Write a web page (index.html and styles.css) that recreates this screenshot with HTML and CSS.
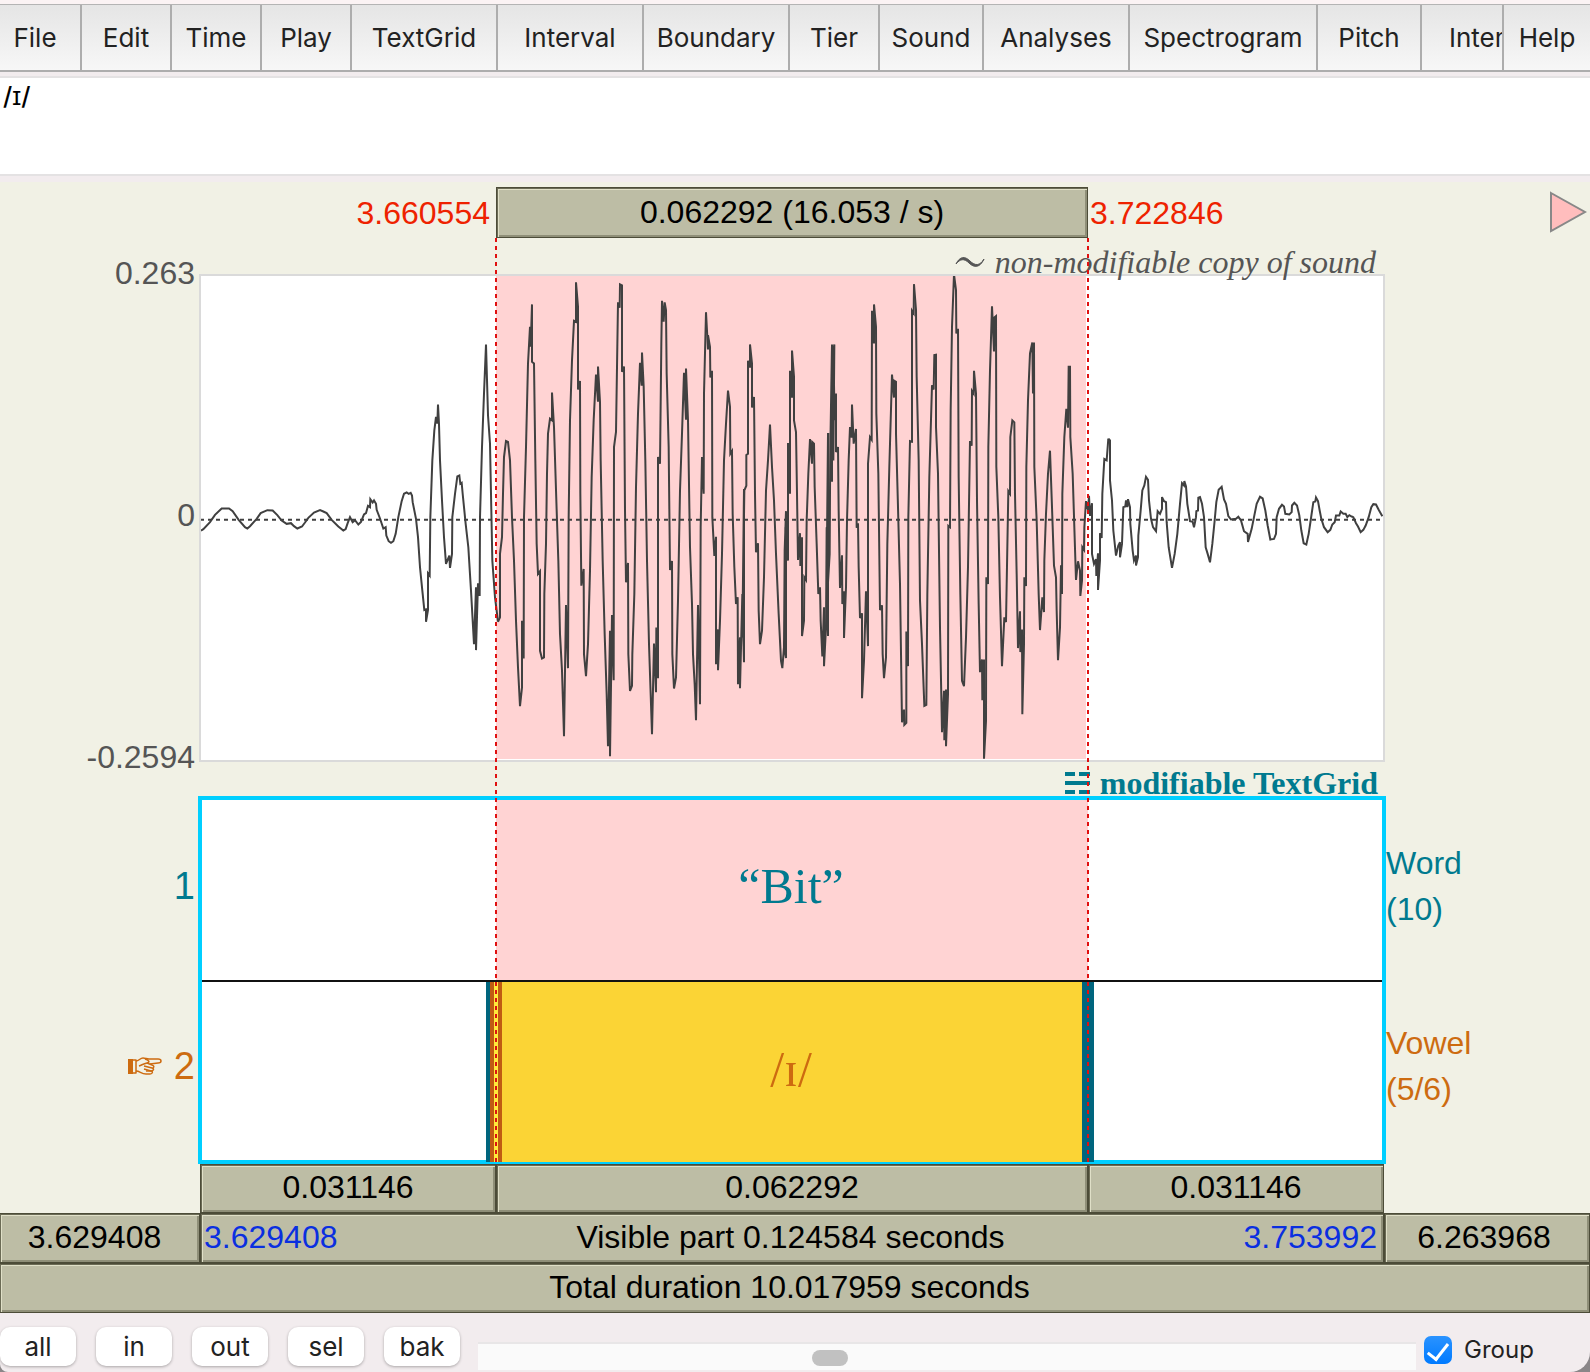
FILE: index.html
```html
<!DOCTYPE html>
<html lang="en">
<head>
    <meta charset="UTF-8">
    <meta name="viewport" content="width=device-width, initial-scale=1.0">
    <title>TextGrid editor</title>
    <link rel="stylesheet" href="styles.css">
</head>
<body>
    <div class="window">
        <nav class="menu-bar">
            <button type="button" class="menu menu-first">File</button>
            <button type="button" class="menu">Edit</button>
            <button type="button" class="menu">Time</button>
            <button type="button" class="menu">Play</button>
            <button type="button" class="menu menu-wide">TextGrid</button>
            <button type="button" class="menu menu-wide">Interval</button>
            <button type="button" class="menu menu-wide">Boundary</button>
            <button type="button" class="menu">Tier</button>
            <button type="button" class="menu menu-medium">Sound</button>
            <button type="button" class="menu menu-wide">Analyses</button>
            <button type="button" class="menu menu-widest">Spectrogram</button>
            <button type="button" class="menu menu-medium">Pitch</button>
            <button type="button" class="menu menu-cut">Intensity</button>
            <button type="button" class="menu menu-last">Help</button>
        </nav>

        <textarea class="label-text" aria-label="Interval text" spellcheck="false">/ɪ/</textarea>

        <main class="editor">
            <!-- selection -->
            <span class="time time-start">3.660554</span>
            <button type="button" class="bar bar-selection">0.062292 (16.053 / s)</button>
            <span class="time time-end">3.722846</span>
            <button type="button" class="play" aria-label="Play">
                <svg width="38" height="42" viewBox="0 0 38 42"><path d="M2 2 L36 21 L2 40 Z" fill="#ffbdbd" stroke="#888" stroke-width="2"/></svg>
            </button>

            <!-- sound -->
            <div class="caption caption-sound">
                <svg width="30" height="12" viewBox="0 0 30 12"><path d="M1 8 C5 0 10 0 15 5 C20 10 25 10 29 3 C25 12 19 12 14 7 C9 2 5 3 1 8 Z" fill="#555" stroke="#555" stroke-width="1"/></svg>
                <span>non-modifiable copy of sound</span>
            </div>
            <div class="axis">
                <span>0.263</span>
                <span>0</span>
                <span>-0.2594</span>
            </div>
            <div class="sound">
                <svg class="wave" viewBox="0 45 3552 1455" preserveAspectRatio="none">
                    <rect x="888" y="42" width="1770" height="1452" fill="#ffd3d3"/>
                    <path class="zero" d="M0 778 H3552"/>
                    <polyline transform="translate(-30 0)" points="33,810 40,806 60,785 75,763 95,744 117,744 128,752 146,778 165,800 172,804 180,797 200,775 212,758 232,749 248,750 262,764 275,780 290,790 303,788 312,797 322,804 336,798 345,786 355,772 372,756 390,749 400,753 410,758 425,778 445,798 460,810 467,806 473,788 480,770 488,785 495,779 505,792 513,784 522,762 528,758 534,736 540,740 541,716 548,726 552,720 558,730 560,748 570,774 580,804 587,800 589,825 596,842 603,847 610,842 617,820 625,770 635,722 642,700 650,696 656,700 662,697 666,705 668,725 678,775 684,830 690,920 697,990 703,1048 708,1046 708,1083 714,1048 714,938 719,945 721,770 727,600 733,510 738,470 742,490 744,433 747,492 750,600 756,720 762,830 768,910 778,885 780,922 786,880 787,770 795,700 802,648 808,645 811,670 815,667 818,700 827,790 835,860 843,990 852,1150 858,980 858,1168 864,968 869,1006 870,770 876,560 882,400 888,253 894,465 900,550 904,750 907,900 915,1010 924,1083"/>
                    <polyline transform="translate(870 0)" points="24,1083 30,1070 30,880 36,830 39,700 42,590 48,542 54,545 60,600 66,770 72,900 78,1080 84,1220 90,1336 96,1280 96,1080 101,1193 102,770 108,560 114,310 120,200 122,260 126,133 126,305 132,310 136,600 140,850 144,940 150,932 150,1170 156,1193 162,1190 163,1000 168,850 171,640 174,520 180,475 186,480 186,397 192,500 200,750 205,900 210,1120 216,1230 222,1426 228,1033 234,1222 236,770 240,480 246,300 252,182 258,185 258,67 264,140 264,388 270,362 271,700 274,975 281,925 282,1180 288,1246 294,1150 300,930 305,650 311,480 318,343 324,424 324,319 330,425 332,600 338,900 344,1120 350,1300 354,1456 360,1110 360,1486 366,1063 371,1258 372,560 378,515 384,127 389,143 390,73 396,76 396,335 402,319 405,750 408,965 414,907 415,1180 420,1290 426,1275 427,1180 433,1000 438,680 444,460 450,308 455,376 456,277 461,378 466,600 471,900 477,1150 486,1420 492,1148 498,1294 499,1100 504,1252 504,590 510,610 514,250 516,122 521,185 524,127 528,150 530,340 536,560 540,928 546,901 547,1180 552,1283 558,1250 564,1020 570,690 576,520 582,338 588,478 588,325 594,480 600,860 606,1030 609,1180 614,1270 618,1378 624,1033 630,1330 632,800 636,590 641,700 642,400 648,157"/>
                    <polyline transform="translate(1500 0)" points="18,157 24,268 24,225 30,260 31,352 36,332 37,770 43,886 48,829 48,1210 54,1106 54,1228 60,1080 66,880 72,600 78,490 84,391 90,440 91,580 96,572 98,760 103,920 108,1030 113,1010 114,1270 120,1130 120,1282 127,1000 132,1204 132,686 127,1130 133,690 139,676 139,584 144,580 144,302 150,322 150,253 156,310 156,442 162,410 165,700 168,875 174,848 176,1050 180,1150 186,1110 192,950 198,690 204,600 210,493 216,620 222,720 228,880 236,1060 243,1200 247,1222 252,1160 254,870 258,752 258,1192 252,1150 256,800 264,900 264,548 270,700 270,332 276,412 276,271 282,350 282,480 288,515 291,700 294,898 300,818 301,916 306,830 306,1126 312,1080 313,950 318,958 320,780 325,640 330,536 336,610 337,545 342,550 344,680 350,850 355,1000 360,980 362,1080 367,1187 372,1040 372,1216 378,1100 380,800 384,1126 384,518 379,1050 389,880 391,518 396,664 396,253 391,560 400,600 403,253 400,270 404,480 408,400 408,575 414,560 416,750 420,982 426,884 427,1030 432,992 432,1132 438,980 441,780 446,600 450,500 455,532 456,433 461,550 468,506 470,802 474,788 476,920 480,1072 486,1058 486,1312 492,1200 498,992 504,1156 504,610 510,530 515,538 516,152 522,250 522,133 528,200 529,460 535,640 540,1048 546,1034 548,1180 552,1252 558,1190 562,850 568,620 576,343 582,412 582,361 588,365 588,520 594,740 600,970 606,1384 612,1346 613,1392 619,1386 619,1112 624,1216 625,770 630,542 636,544 636,152 641,160 642,73"/>
                    <polyline transform="translate(2070 0)" points="72,73 78,150 80,350 86,600 90,1020 96,1150 103,1335 109,1332 112,1000 118,650 126,375 131,388 133,285 138,284 138,500 144,640 150,1100 156,1414 162,1290 163,1438 168,1286 168,1456 174,1300 175,796 180,800 182,450 186,200 192,43 198,90 199,220 204,206 206,650 211,1000 216,1260 222,1276 228,1130 234,920 240,542 245,556 246,392 251,400 252,332 258,400 261,720 266,1030 270,1234 276,1196 277,1318 282,1196 282,1493 288,1380 289,950 294,970 295,560 300,330 306,139 312,274 313,172 318,168 319,620 325,770 330,1010 336,1216 343,1070 348,1084 355,692 360,700 361,530 367,480 373,486 375,700 380,940 384,1162 390,1052 391,1174 396,1106 397,1360 402,1150 403,950 408,976 409,620 414,420 420,280 427,247 429,400 432,247 433,620 440,780 446,1000 450,1108 457,1010 462,1054 463,900 468,760 474,640 480,571 486,740 492,915 498,950 500,1050 504,1198 510,1100 513,914 516,1000 517,700 523,530 529,446 534,502 536,320 540,320 541,530 548,640 553,800 558,958 564,902 570,930 571,1006 576,960 577,860 582,868 583,800 588,722 594,748 597,706 600,766 606,728 606,880 612,910 618,896 619,946 624,878 624,988 630,900 630,818 635,832 637,700 643,596 650,600 655,535"/>
                    <polyline transform="translate(2640 420)" points="85,115 90,120 90,240 96,300 100,390 108,465 115,435 120,425 120,470 126,430 130,320 136,318 138,300 142,320 144,296 150,320 151,370 158,450 162,480 168,465 168,495 174,470 175,405 182,330 187,270 193,255 198,229 204,238 207,300 213,355 219,380 228,392 233,332 240,340 246,325 246,290 252,302 258,305 260,365 266,440 276,502 284,460 292,400 300,310 306,248 312,255 313,242 318,258 322,310 330,362 338,364 342,380 348,350 349,332 354,330 355,292 360,290 366,310 372,350 377,440 383,460 390,485 397,430 404,360 409,305 416,268 425,259 432,297 438,310 445,347 453,357 468,355 475,349 483,360 492,392 503,400 504,424 515,385 522,350 530,310 540,289 548,294 556,330 563,375 571,417 582,415 588,400 590,350 597,325 606,313 612,318 616,340 628,342 635,335 636,315 643,307 651,315 658,345 664,390 671,428 679,432 686,400 692,360 700,305 706,303 708,291 714,302 719,330 724,355 732,380 743,395 751,388 757,372 764,365 768,345 778,345 782,333 790,340 797,340 802,350 808,344 815,348 820,350 828,368 834,378 842,395 850,388 857,375 866,350 874,320 880,311 888,312 896,328 907,347"/>
                </svg>
            </div>

            <!-- tiers -->
            <div class="caption caption-grid">
                <svg width="26" height="22" viewBox="0 0 26 22"><path d="M1 2 H11 M15 2 H26 M1 11 H26 M1 20 H11 M15 20 H26" stroke="#007a8f" stroke-width="4"/></svg>
                <span>modifiable TextGrid</span>
            </div>
            <div class="tier-numbers">
                <span>1</span>
                <span class="selected">
                    <svg width="34" height="18" viewBox="0 0 34 18" fill="none" stroke="#cd6b10" stroke-width="1.5" stroke-linejoin="round">
                        <path d="M0 2 H5 V17 H0 Z" fill="#cd6b10" stroke="none"/>
                        <path d="M5 3 H8 V16 H5"/>
                        <path d="M8 4 C11 4 12 1 15 1 C17 1 19 2 21 2 H30 C34 2 34 6 30 6 L22 7"/>
                        <path d="M17 2 C20 3 23 5 19 6 C15 7 14 8 11 9"/>
                        <path d="M8 14 C12 14 13 17 18 17 H22 C25 17 25 14 23 14 H18"/>
                        <path d="M19 6 L24 8 C27 9 26 11 24 11 L16 9 M24 11 C27 12 25 14 23 14 L16 12"/>
                    </svg>
                    2
                </span>
            </div>
            <div class="tiers">
                <div class="tier">
                    <div class="interval interval-word">“Bit”</div>
                </div>
                <div class="tier">
                    <div class="interval interval-vowel">/ɪ/</div>
                </div>
            </div>
            <div class="tier-names">
                <span>Word<br>(10)</span>
                <span class="selected">Vowel<br>(5/6)</span>
            </div>

            <!-- dotted lines at both ends of the selection -->
            <div class="cursors"></div>

            <!-- time bars -->
            <button type="button" class="bar bar-before">0.031146</button>
            <button type="button" class="bar">0.062292</button>
            <button type="button" class="bar">0.031146</button>
            <button type="button" class="bar bar-left">3.629408</button>
            <button type="button" class="bar bar-visible">
                <span class="edge">3.629408</span>
                <span>Visible part 0.124584 seconds</span>
                <span class="edge">3.753992</span>
            </button>
            <button type="button" class="bar bar-right">6.263968</button>
            <button type="button" class="bar bar-total">Total duration 10.017959 seconds</button>
        </main>

        <footer class="controls">
            <button type="button" class="zoom">all</button>
            <button type="button" class="zoom">in</button>
            <button type="button" class="zoom">out</button>
            <button type="button" class="zoom">sel</button>
            <button type="button" class="zoom">bak</button>
            <input type="range" class="scroll" min="0" max="100" value="37" aria-label="Scroll">
            <label class="group"><input type="checkbox" checked> Group</label>
        </footer>
    </div>
</body>
</html>
```
FILE: styles.css
```css
* {
    box-sizing: border-box;
}

body {
    margin: 0;
    background-color: #8a8688;
    font-family: "Liberation Sans", Arial, sans-serif;
    font-size: 32px;
    color: #000;
}

button {
    margin: 0;
    padding: 0;
    border: none;
    font: inherit;
    color: inherit;
}

.window {
    display: flex;
    flex-direction: column;
    min-height: 100vh;
    border-top: 4px solid #fbf3f4;
    background-color: #f2ecee;
    border-radius: 0 0 20px 8px;
    overflow: hidden;
}

/* menu bar */
.menu-bar {
    display: flex;
    height: 68px;
    background: linear-gradient(#e5e5e5, #f7f7f7);
    border-top: 1px solid #b4b4b4;
    border-bottom: 2px solid #adadad;
}

.menu {
    flex: none;
    width: 90px;
    background: none;
    border-right: 2px solid #adadad;
    font-family: Inter, sans-serif;
    font-size: 26px;
    color: #222;
}

.menu-first {
    width: 82px;
    padding-right: 10px;
}

.menu-medium {
    width: 104px;
}

.menu-wide {
    width: 146px;
}

.menu-widest {
    width: 188px;
}

.menu-cut {
    flex: 1;
    min-width: 0;
    padding-left: 27px;
    text-align: left;
    overflow: hidden;
}

.menu-last {
    width: 86px;
    border-right: none;
}

.label-text {
    display: block;
    width: 100%;
    height: 100px;
    margin: 4px 0 6px;
    padding: 2px 3px;
    border: solid #e4e2e3;
    border-width: 2px 0;
    outline: none;
    resize: none;
    background-color: #fff;
    font-family: Inter, sans-serif;
    font-size: 25px;
    font-weight: 500;
    line-height: 32px;
    color: #000;
}

/* editor */
.editor {
    display: grid;
    grid-template-columns: 200px 1fr 2fr 1fr 206px;
    grid-template-rows: 56px 37px 486px 35px 368px 49px 50px 50px;
    background-color: #f1f1e5;
}

.bar {
    padding-bottom: 2px;
    background-color: #bdbda5;
    border: 1px solid #4c4c38;
    box-shadow: inset 1px 1px 0 #6b6b55, inset 2px 2px 0 #e0e0c8, inset -2px -2px 0 #8f8f78;
}

.bar-selection {
    margin-top: 5px;
    padding-bottom: 0;
}

.time {
    padding: 5px 6px 0 2px;
    line-height: 52px;
    color: #ee2200;
}

.time-start {
    grid-column: 1 / 3;
    text-align: right;
}

.play {
    display: flex;
    justify-content: flex-end;
    padding: 9px 3px 0;
    background: none;
}

.caption {
    display: flex;
    align-items: center;
    justify-content: flex-end;
    padding-right: 8px;
    font-family: "Liberation Serif", "Times New Roman", serif;
    font-size: 32px;
    line-height: 36px;
    white-space: nowrap;
}

.caption-sound {
    grid-column: 2 / 5;
    grid-row: 2;
    gap: 10px;
    padding-top: 10px;
    font-style: italic;
    color: #555;
    z-index: 1;
}

.caption-grid {
    grid-column: 2 / 5;
    grid-row: 4;
    gap: 10px;
    padding-right: 6px;
    padding-top: 8px;
    font-weight: bold;
    color: #007a8f;
}

.axis {
    grid-column: 1;
    grid-row: 3;
    display: flex;
    flex-direction: column;
    justify-content: space-between;
    margin: -20px 0 -14px;
    padding-right: 5px;
    line-height: 36px;
    text-align: right;
    color: #555;
}

.sound {
    grid-column: 2 / 5;
    grid-row: 3;
    background-color: #fff;
    outline: 2px solid #dadada;
    outline-offset: -1px;
}

.wave {
    display: block;
    width: 100%;
    height: 100%;
    overflow: visible;
}

.wave polyline,
.wave path {
    fill: none;
    stroke: #404040;
    stroke-width: 2px;
    vector-effect: non-scaling-stroke;
}

.wave .zero {
    stroke-dasharray: 4 4;
}

.tier-numbers,
.tier-names {
    grid-row: 5;
    display: grid;
    grid-template-rows: 1fr 1fr;
    align-items: center;
    padding-bottom: 8px;
    color: #007a8f;
}

.tier-numbers {
    grid-column: 1;
    justify-items: end;
    padding-right: 5px;
    font-size: 38px;
}

.tier-numbers span {
    display: flex;
    align-items: center;
    gap: 12px;
}

.tier-names {
    grid-column: 5;
    padding-left: 2px;
    line-height: 46px;
}

.tier-numbers .selected,
.tier-names .selected {
    color: #cd6b10;
}

.tiers {
    grid-column: 2 / 5;
    grid-row: 5;
    display: grid;
    grid-template-rows: 1fr 1fr;
    margin: 2px 0;
    background-color: #fff;
    outline: 4px solid #00cfff;
    outline-offset: -2px;
    font-family: "Liberation Serif", "Times New Roman", serif;
}

.tier {
    display: grid;
    grid-template-columns: 1fr 2fr 1fr;
}

.tier + .tier {
    border-top: 2px solid #111;
}

.interval {
    grid-column: 2;
    display: flex;
    align-items: center;
    justify-content: center;
    padding-right: 2px;
}

.interval-word {
    padding-bottom: 6px;
    background-color: #ffd3d3;
    font-size: 50px;
    color: #007a8f;
}

.interval-vowel {
    position: relative;
    padding-bottom: 6px;
    background-color: #fbd435;
    font-size: 50px;
    color: #cd6b10;
}

.interval-vowel::before,
.interval-vowel::after {
    content: "";
    position: absolute;
    top: 0;
    bottom: 0;
}

.interval-vowel::before {
    left: -10px;
    width: 16px;
    background: linear-gradient(90deg, #00657e 4px, #c05c12 4px 8px, #ffe93b 8px 12px, #c05c12 12px);
}

.interval-vowel::after {
    right: -6px;
    width: 12px;
    background-color: #00657e;
}

.cursors {
    grid-column: 3;
    grid-row: 2 / 6;
    display: flex;
    justify-content: space-between;
    margin: 0 -1px;
    z-index: 2;
    pointer-events: none;
}

.cursors::before,
.cursors::after {
    content: "";
    width: 2px;
    background: repeating-linear-gradient(#e01010 0 4px, transparent 4px 8px);
}

.bar-before {
    grid-column: 2;
}

.bar-left {
    grid-column: 1;
    padding-right: 10px;
    border-left: none;
}

.bar-visible {
    grid-column: 2 / 5;
    display: flex;
    align-items: center;
    justify-content: space-between;
    padding: 0 6px 2px 3px;
}

.edge {
    color: #0a2fe0;
}

.bar-right {
    padding-right: 6px;
}

.bar-total {
    grid-column: 1 / -1;
    padding-right: 10px;
    border-left: none;
}

/* zoom buttons and scroll bar */
.controls {
    display: flex;
    align-items: flex-start;
    gap: 20px;
    padding-top: 14px;
    font-family: Inter, sans-serif;
    font-size: 26px;
    color: #222;
}

.zoom {
    width: 76px;
    height: 39px;
    background-color: #fff;
    border-radius: 10px;
    box-shadow: 0 1px 3px rgba(0, 0, 0, 0.3);
}

.scroll {
    appearance: none;
    flex: 1;
    min-width: 0;
    height: 28px;
    margin: 15px 0 0 -2px;
    padding-top: 2px;
    background-color: #fafafa;
    border-top: 2px solid #e8e6e7;
}

.scroll::-webkit-slider-thumb {
    appearance: none;
    width: 36px;
    height: 16px;
    border-radius: 8px;
    background-color: #c1c1c1;
}

.group {
    display: flex;
    align-items: center;
    gap: 12px;
    width: 166px;
    margin: 7px 0 0 -12px;
    font-size: 24px;
    line-height: 32px;
}

.group input {
    appearance: none;
    display: flex;
    justify-content: center;
    width: 28px;
    height: 28px;
    margin: 0;
    border-radius: 7px;
    background: linear-gradient(#2a93ff, #007aff);
}

.group input:checked::before {
    content: "";
    width: 9px;
    height: 18px;
    margin-top: 3px;
    border: solid #fff;
    border-width: 0 3px 3px 0;
    transform: rotate(38deg);
}
```
